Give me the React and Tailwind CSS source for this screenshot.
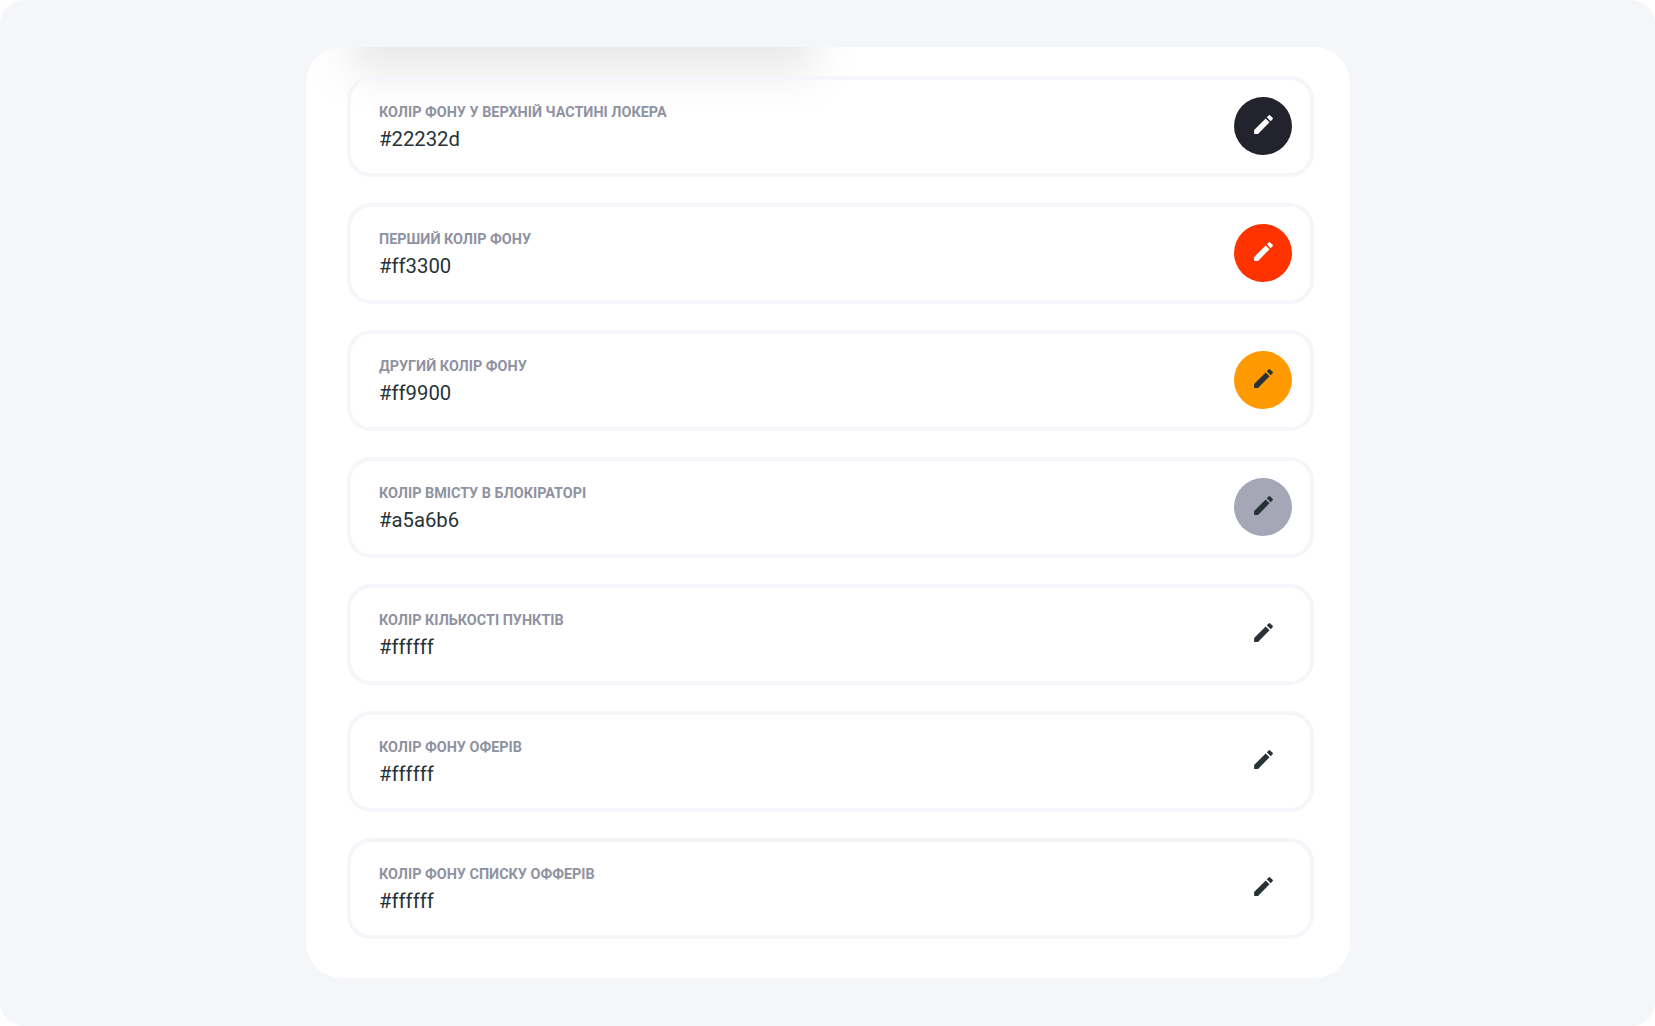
const rows = [
  ["КОЛІР ФОНУ У ВЕРХНІЙ ЧАСТИНІ ЛОКЕРА", "#22232d", "bg-[#22232d]", "#ffffff"],
  ["ПЕРШИЙ КОЛІР ФОНУ", "#ff3300", "bg-[#ff3300]", "#ffffff"],
  ["ДРУГИЙ КОЛІР ФОНУ", "#ff9900", "bg-[#ff9900]", "#263238"],
  ["КОЛІР ВМІСТУ В БЛОКІРАТОРІ", "#a5a6b6", "bg-[#a5a6b6]", "#263238"],
  ["КОЛІР КІЛЬКОСТІ ПУНКТІВ", "#ffffff", "bg-white", "#263238"],
  ["КОЛІР ФОНУ ОФЕРІВ", "#ffffff", "bg-white", "#263238"],
  ["КОЛІР ФОНУ СПИСКУ ОФФЕРІВ", "#ffffff", "bg-white", "#263238"],
];

function Pencil({ color }) {
  return (
    <svg width="25" height="25" viewBox="0 0 24 24" fill={color} className="mt-[-4px] ml-[1px]">
      <path d="M3 17.25V21h3.75L17.81 9.94l-3.75-3.75L3 17.25zM20.71 7.04a1 1 0 0 0 0-1.41l-2.34-2.34a1 1 0 0 0-1.41 0l-1.83 1.83 3.75 3.75 1.83-1.83z" />
    </svg>
  );
}

export default function App() {
  return (
    <div className="w-[1655px] h-[1026px] bg-white overflow-hidden font-['Roboto',sans-serif]">
      <div className="w-full h-full bg-[#f4f6fa] rounded-[24px] pt-[47px] pl-[306px]">
        <div className="relative overflow-hidden w-[1044px] h-[931px] bg-white rounded-[36px] pt-[28.5px] pl-[40.5px] pr-[36px] flex flex-col gap-[26px]">
          <div className="absolute left-[44px] top-[-60px] w-[465px] h-[85px] bg-black/[0.09] blur-[22px]" />
          {rows.map(([label, value, bg, color]) => (
            <div key={label} className="relative h-[101px] shrink-0 border-4 border-[#f4f6fa] rounded-[24px] pl-[28.5px] pr-[18px] flex items-center justify-between">
              <div className="flex flex-col mt-[4px]">
                <span className="text-[14.4px] leading-[18px] font-bold text-[#8f92a1] mb-[4px]">{label}</span>
                <span className="text-[20.3px] leading-[26px] text-[#263238]">{value}</span>
              </div>
              <div className={`w-[58px] h-[58px] rounded-full flex items-center justify-center ${bg}`}>
                <Pencil color={color} />
              </div>
            </div>
          ))}
        </div>
      </div>
    </div>
  );
}
